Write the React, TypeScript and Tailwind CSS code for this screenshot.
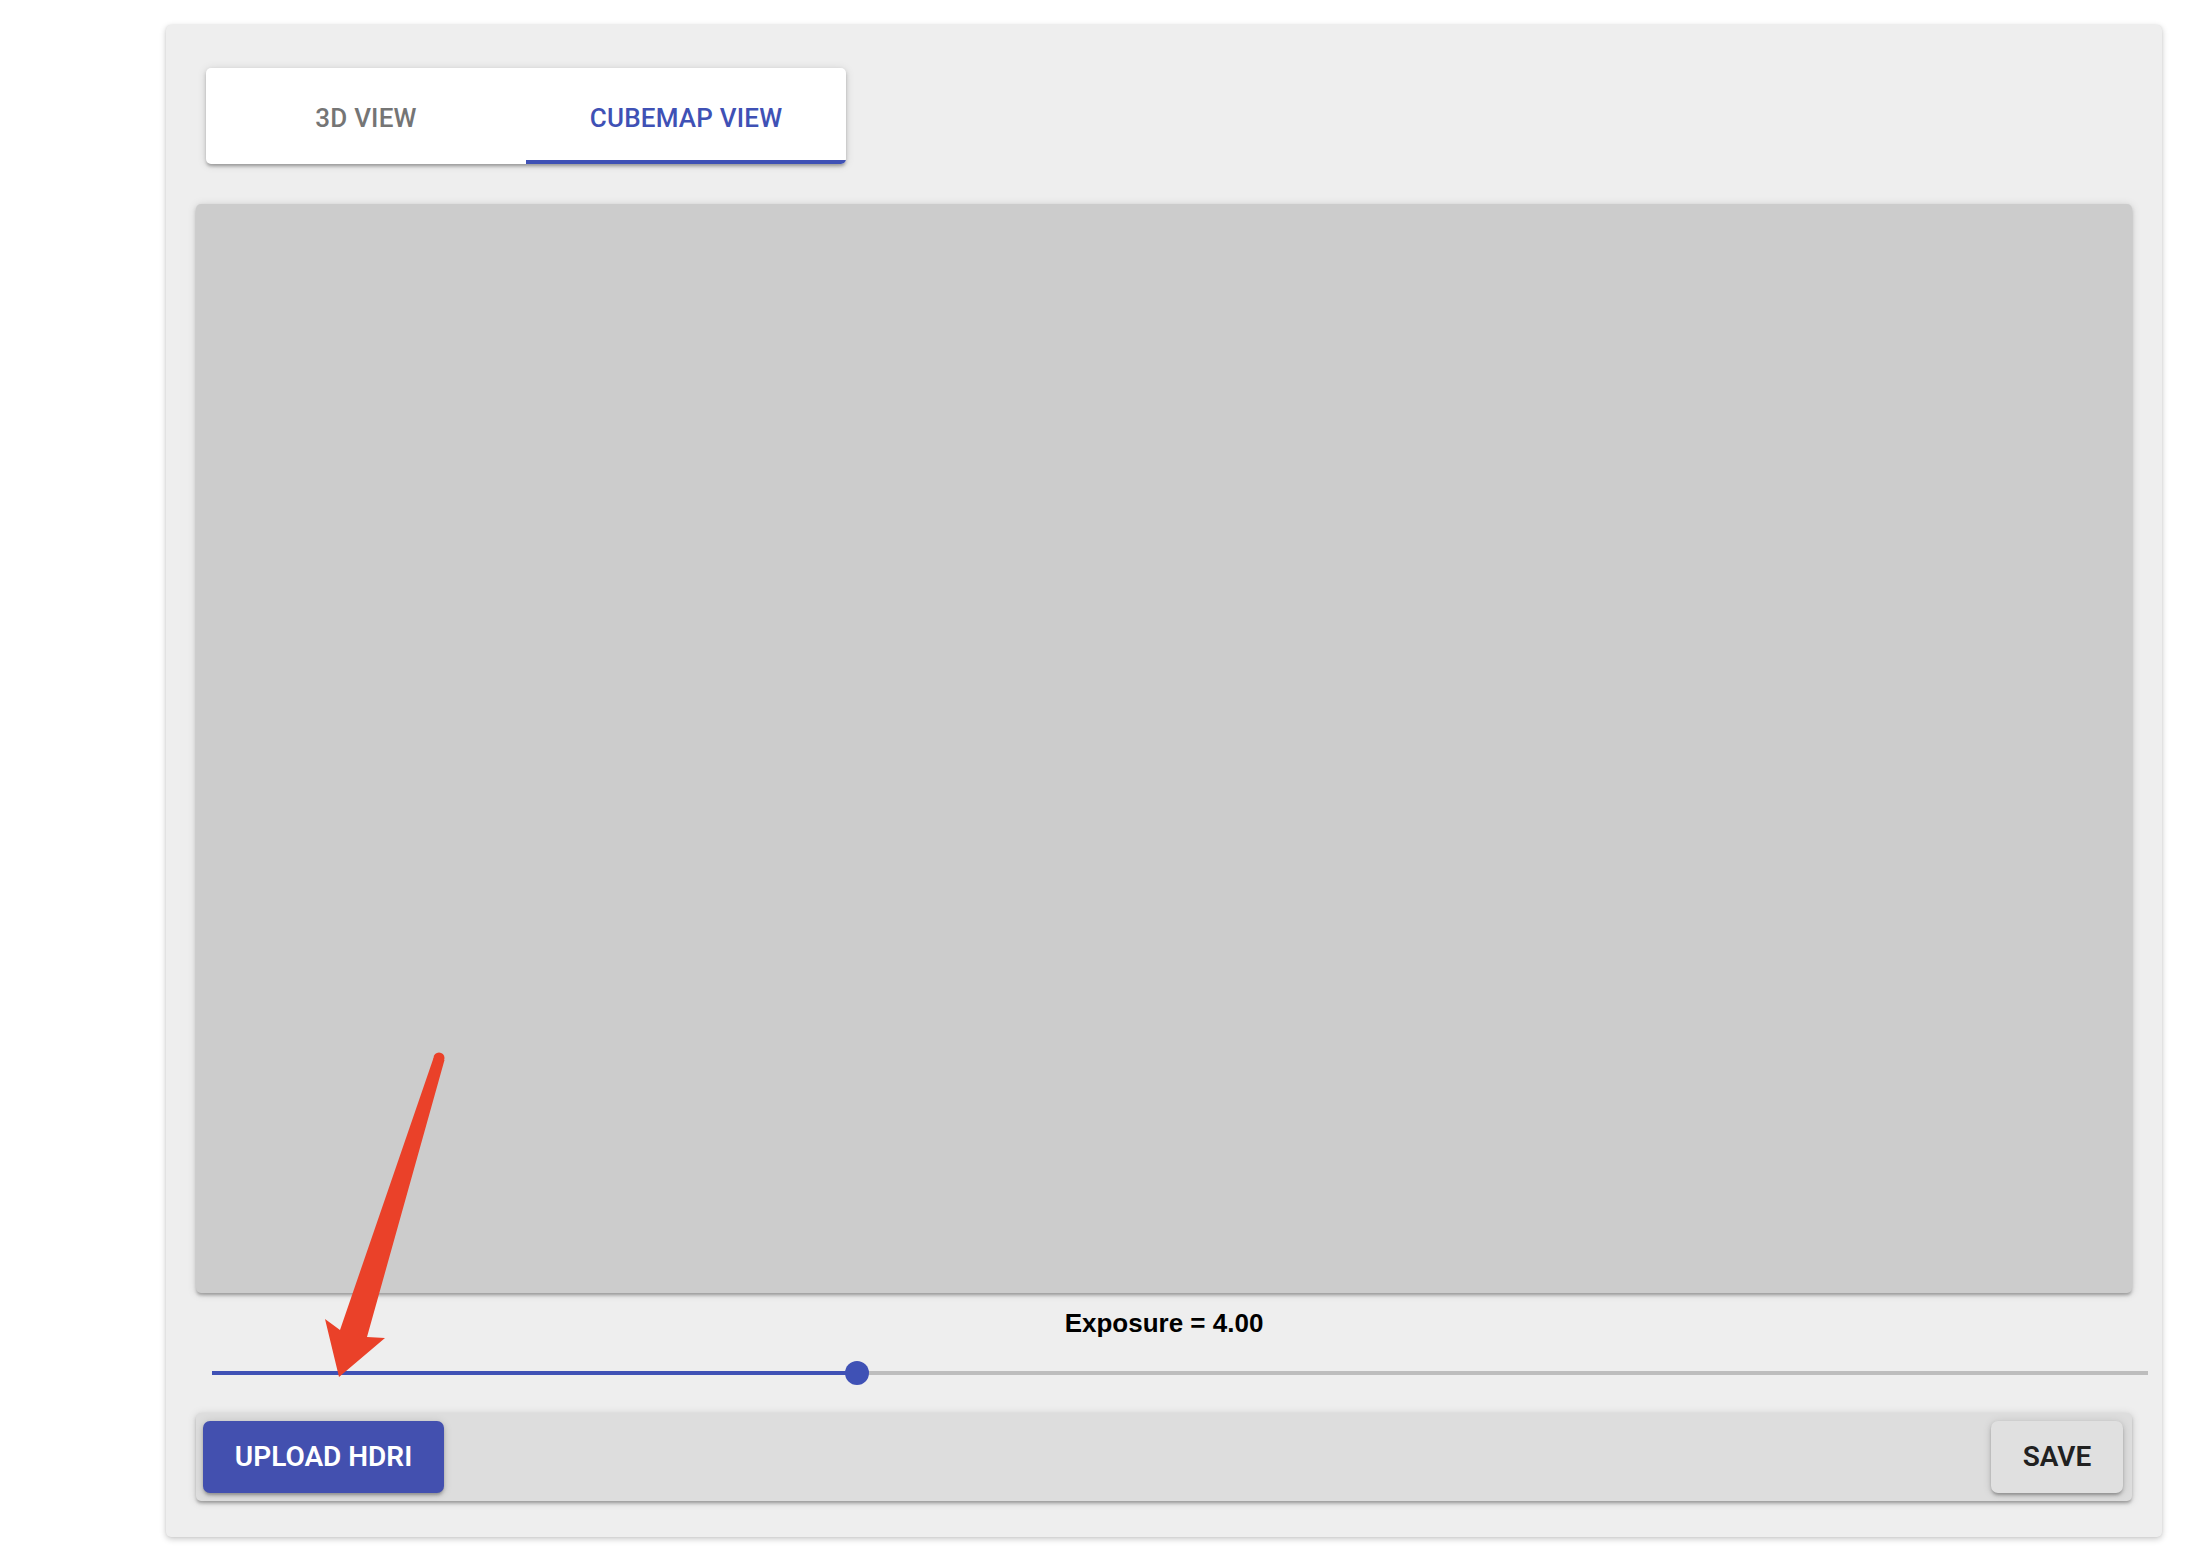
import { useState } from "react";

const tabs = ["3D View", "Cubemap View"];

const raised =
  "shadow-[0_3px_3px_-1px_rgba(0,0,0,0.2),0_2px_4px_0_rgba(0,0,0,0.14),0_1px_10px_0_rgba(0,0,0,0.12)]";

function ExposureSlider({ value, min, max }: { value: number; min: number; max: number }) {
  const pct = ((value - min) / (max - min)) * 100;

  return (
    <div className="relative h-[24px] ml-[16px] mr-[-16px] flex items-center">
      <div className="h-[4px] w-full bg-[#bdbdbd]" />
      <div className="absolute left-0 h-[4px] bg-[#3f51b5]" style={{ width: `${pct}%` }} />
      <div
        className="absolute w-[24px] h-[24px] rounded-full bg-[#3f51b5] -translate-x-1/2"
        style={{ left: `${pct}%` }}
      />
    </div>
  );
}

export default function App() {
  const [active, setActive] = useState(1);
  const exposure = 4;

  return (
    <div className="relative w-[2210px] h-[1560px] bg-white font-['Roboto',sans-serif]">
      {/* Main panel */}
      <div className="absolute left-[166px] top-[25px] w-[1996px] h-[1512px] bg-[#eeeeee] rounded-[5px] shadow-[0_2px_6px_rgba(0,0,0,0.22),0_0_2px_rgba(0,0,0,0.08)] pt-[43px] px-[30px] flex flex-col">
        {/* Tabs */}
        <div className={`ml-[10px] w-[640px] h-[96px] flex bg-white rounded-[5px] overflow-hidden ${raised}`}>
          {tabs.map((tab, i) => (
            <button
              key={tab}
              onClick={() => setActive(i)}
              className={`relative flex-1 flex items-center justify-center pt-[4px] text-[26px] font-medium uppercase tracking-[0.2px] ${
                active === i ? "text-[#3f51b5]" : "text-[#757575]"
              }`}
            >
              {tab}
              {active === i && <span className="absolute left-0 right-0 bottom-0 h-[4px] bg-[#3f51b5]" />}
            </button>
          ))}
        </div>

        {/* Cubemap canvas */}
        <div className={`mt-[40px] h-[1089px] bg-[#cccccc] rounded-[5px] ${raised}`} />

        {/* Exposure */}
        <div className="mt-[17px] text-center text-[26px] leading-[26px] font-bold text-black font-['Liberation_Sans',Arial,sans-serif]">
          Exposure = {exposure.toFixed(2)}
        </div>
        <div className="mt-[25px]">
          <ExposureSlider value={exposure} min={0} max={12} />
        </div>

        {/* Actions */}
        <div className={`mt-[28px] h-[88px] bg-[#dddddd] rounded-[5px] pl-[7px] pr-[9px] flex items-center justify-between ${raised}`}>
          <button className={`h-[72px] w-[241px] rounded-[7px] bg-[#4350af] text-white text-[28px] font-semibold uppercase ${raised}`}>
            Upload HDRI
          </button>
          <button className={`h-[72px] w-[132px] rounded-[7px] bg-[#e0e0e0] text-[#212121] text-[28px] font-semibold uppercase ${raised}`}>
            Save
          </button>
        </div>
      </div>

      {/* Annotation arrow */}
      <svg className="absolute left-0 top-0 pointer-events-none" width="2210" height="1560">
        <polygon
          fill="#ea4129"
          points="433.5,1058 444.5,1060 367,1337 385,1338 339,1377 325,1319 340,1330"
        />
        <circle cx="439" cy="1058" r="5.5" fill="#ea4129" />
      </svg>
    </div>
  );
}
